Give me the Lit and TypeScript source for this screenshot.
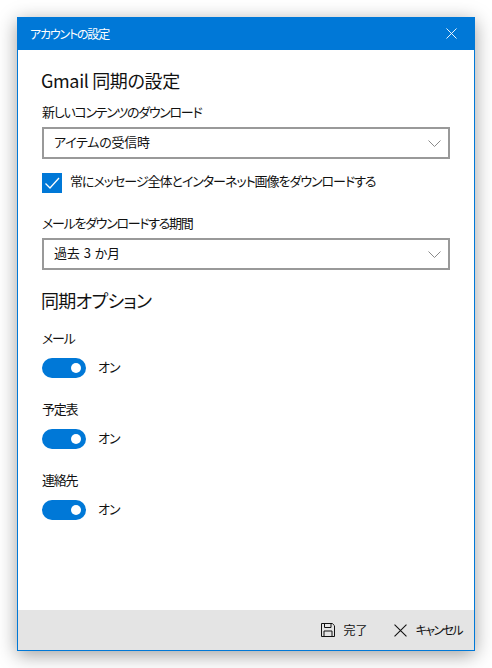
import { LitElement, html, css, svg } from 'lit';
import { customElement } from 'lit/decorators.js';

const closeIcon = (size: number, color: string) => html`
  <svg width=${size} height=${size} viewBox="0 0 12 12">
    ${svg`<path d="M.5.5l11 11M11.5.5l-11 11" fill="none" stroke=${color} stroke-width="1"/>`}
  </svg>`;

const chevron = html`
  <svg class="chevron" width="13" height="7" viewBox="0 0 13 7">
    <path d="M.5.5l6 6 6-6" fill="none" stroke="#8a8a8a" stroke-width="1"/>
  </svg>`;

const saveIcon = html`
  <svg width="14" height="14" viewBox="0 0 14 14">
    <path d="M.5.5h10.8l2.2 2.2v10.8H.5zM3.5.5v4h6.5v-4M3 13.5V8h8v5.5" fill="none" stroke="#111" stroke-width="1"/>
  </svg>`;

@customElement('app-root')
export class AppRoot extends LitElement {
  static styles = css`
    :host {
      display: block;
      width: 492px;
      height: 668px;
      padding: 17px;
      box-sizing: border-box;
      background: #fff;
      font-family: "Noto Sans CJK JP", "Noto Sans", sans-serif;
      font-feature-settings: "palt";
      color: #111;
    }
    .window {
      width: 458px;
      height: 634px;
      box-sizing: border-box;
      border: 1px solid #0078d7;
      border-top: 0;
      display: flex;
      flex-direction: column;
      background: #fff;
      box-shadow: 0 4px 18px rgba(0, 0, 0, 0.38);
    }
    .titlebar {
      height: 33px;
      flex: none;
      background: #0078d7;
      color: #fff;
      display: flex;
      align-items: center;
      justify-content: space-between;
      padding: 0 17px 0 12px;
      font-size: 12px;
      letter-spacing: -1.2px;
    }
    .titlebar svg { display: block; }
    .content {
      flex: 1;
      padding: 18px 24px 0 24px;
      display: flex;
      flex-direction: column;
      align-items: stretch;
    }
    h2 {
      margin: 0 0 0 -1px;
      font-size: 18px;
      font-weight: 400;
      line-height: 24px;
      padding-bottom: 2px;
      letter-spacing: -0.35px;
    }
    .label {
      font-size: 13px;
      line-height: 16px;
      padding-bottom: 2px;
      letter-spacing: -1.3px;
    }
    .first { margin-top: 10px; }
    .select {
      height: 32px;
      box-sizing: border-box;
      border: 2px solid #999;
      display: flex;
      align-items: center;
      justify-content: space-between;
      padding: 0 7px 0 10px;
      font-size: 13px;
      letter-spacing: -0.25px;
      margin-top: 5px;
    }
    .select span { padding-bottom: 3px; }
    .spaced { word-spacing: 1.5px; }
    .chevron { display: block; }
    .check-row {
      display: flex;
      align-items: center;
      gap: 8px;
      margin-top: 14px;
      font-size: 13px;
      letter-spacing: -1.03px;
    }
    .check-row span { line-height: 15px; padding-bottom: 5px; }
    .check {
      width: 20px;
      height: 20px;
      background: #0078d7;
      flex: none;
    }
    .check svg { display: block; }
    .period { margin-top: 22px; }
    .options-head { margin-top: 18px; letter-spacing: -0.7px; }
    .option { margin-top: 16px; }
    .option + .option { margin-top: 23px; }
    .toggle-row {
      display: flex;
      align-items: center;
      gap: 12px;
      margin-top: 10px;
      font-size: 13px;
      letter-spacing: -1px;
    }
    .toggle-row span { line-height: 16px; padding-bottom: 2px; }
    .toggle {
      width: 44px;
      height: 20px;
      border-radius: 10px;
      background: #0078d7;
      display: flex;
      align-items: center;
      justify-content: flex-end;
      padding-right: 5px;
      box-sizing: border-box;
      flex: none;
    }
    .toggle i {
      width: 10px;
      height: 10px;
      border-radius: 50%;
      background: #fff;
      display: block;
    }
    .footer {
      height: 40px;
      flex: none;
      background: #e4e4e4;
      display: flex;
      align-items: center;
      justify-content: flex-end;
      padding-right: 12px;
      gap: 26px;
      font-size: 12px;
    }
    .action {
      display: flex;
      align-items: center;
      gap: 9px;
    }
    .action span { padding-bottom: 2px; }
    .action svg { display: block; }
    .cancel { letter-spacing: -1.6px; }
  `;

  private option(name: string) {
    return html`
      <div class="option">
        <div class="label">${name}</div>
        <div class="toggle-row">
          <div class="toggle"><i></i></div>
          <span>オン</span>
        </div>
      </div>
    `;
  }

  render() {
    return html`
      <div class="window">
        <div class="titlebar">
          <span>アカウントの設定</span>
          ${closeIcon(11, '#fff')}
        </div>
        <div class="content">
          <h2>Gmail 同期の設定</h2>
          <div class="label first">新しいコンテンツのダウンロード</div>
          <div class="select"><span>アイテムの受信時</span>${chevron}</div>
          <div class="check-row">
            <div class="check">
              <svg width="20" height="20" viewBox="0 0 20 20">
                <path d="M3.5 10.5l4.5 4.5 9-10" fill="none" stroke="#fff" stroke-width="1.3"/>
              </svg>
            </div>
            <span>常にメッセージ全体とインターネット画像をダウンロードする</span>
          </div>
          <div class="label period">メールをダウンロードする期間</div>
          <div class="select"><span class="spaced">過去 3 か月</span>${chevron}</div>
          <h2 class="options-head">同期オプション</h2>
          ${this.option('メール')}
          ${this.option('予定表')}
          ${this.option('連絡先')}
        </div>
        <div class="footer">
          <div class="action">${saveIcon}<span>完了</span></div>
          <div class="action">${closeIcon(13, '#111')}<span class="cancel">キャンセル</span></div>
        </div>
      </div>
    `;
  }
}
